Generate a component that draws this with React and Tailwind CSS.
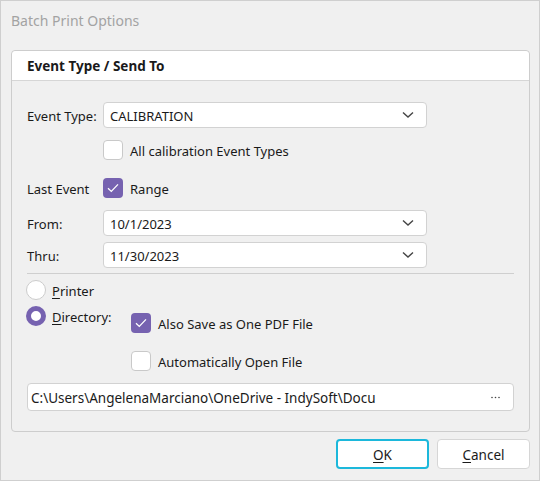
import React, { useState } from "react";

const font = { fontFamily: '"Noto Sans", "Open Sans", sans-serif' };

const Chevron = () => (
  <svg width="12" height="8" viewBox="0 0 12 8" className="text-[#444]">
    <path d="M1 1.5 L6 6 L11 1.5" fill="none" stroke="currentColor" strokeWidth="1.4" />
  </svg>
);

const Dots = () => (
  <svg width="9" height="3" viewBox="0 0 9 3" className="text-[#444]">
    <circle cx="1" cy="1.5" r="0.8" fill="currentColor" />
    <circle cx="4.5" cy="1.5" r="0.8" fill="currentColor" />
    <circle cx="8" cy="1.5" r="0.8" fill="currentColor" />
  </svg>
);

const Check = ({ checked, onClick }) => (
  <div
    onClick={onClick}
    className={
      checked
        ? "w-[20px] h-[20px] rounded-[4px] bg-[#7662b0] flex items-center justify-center shrink-0"
        : "w-[20px] h-[20px] rounded-[4px] bg-white border border-[#c9c9c9] shrink-0"
    }
  >
    {checked && (
      <svg width="12" height="10" viewBox="0 0 12 10">
        <path d="M1 5.2 L4.3 8.4 L11 1.4" fill="none" stroke="white" strokeWidth="1.3" />
      </svg>
    )}
  </div>
);

const Select = ({ value }) => (
  <div className="w-[324px] h-[26px] bg-white border border-[#d2d2d2] rounded-[4px] flex items-center justify-between pl-[6px] pr-[12px]">
    <span className="text-[13px] text-[#1a1a1a] pt-[3px]">{value}</span>
    <Chevron />
  </div>
);

const App = () => {
  const [allTypes, setAllTypes] = useState(false);
  const [range, setRange] = useState(true);
  const [savePdf, setSavePdf] = useState(true);
  const [autoOpen, setAutoOpen] = useState(false);
  const [dest, setDest] = useState("dir");

  return (
    <div style={font} className="w-[540px] h-[481px] bg-[#f0f0f0] border border-[#cfcfcf] flex flex-col text-[#1a1a1a]">
      <div className="h-[49px] pl-[10px] pt-[10px] leading-[20px] text-[14px] text-[#a3a3a3]">Batch Print Options</div>

      {/* panel */}
      <div className="ml-[10px] w-[519px] border border-[#cdcdcd] rounded-[4px] flex flex-col">
        <div className="h-[30px] bg-white border-b border-[#d6d6d6] rounded-t-[4px] flex items-center pl-[15px] text-[13.5px] font-bold">
          <span className="pt-[2px]">Event Type / Send To</span>
        </div>

        <div className="pl-[15px] pb-[20px] text-[13px]">
          <div className="mt-[21px] flex items-center h-[26px]">
            <span className="w-[76px] pt-[3px]">Event Type:</span>
            <Select value="CALIBRATION" />
          </div>
          <div className="mt-[12px] flex items-center h-[20px] pl-[76px]">
            <Check checked={allTypes} onClick={() => setAllTypes(!allTypes)} />
            <span className="ml-[7px] pt-[3px]">All calibration Event Types</span>
          </div>
          <div className="mt-[18px] flex items-center h-[20px]">
            <span className="w-[76px] pt-[3px]">Last Event</span>
            <Check checked={range} onClick={() => setRange(!range)} />
            <span className="ml-[7px] pt-[3px]">Range</span>
          </div>
          <div className="mt-[12px] flex items-center h-[26px]">
            <span className="w-[76px] pt-[3px]">From:</span>
            <Select value="10/1/2023" />
          </div>
          <div className="mt-[6px] flex items-center h-[26px]">
            <span className="w-[76px] pt-[3px]">Thru:</span>
            <Select value="11/30/2023" />
          </div>
          <div className="mt-[5px] w-[487px] h-px bg-[#cfcfcf]"></div>

          <div className="mt-[6px] flex items-center h-[20px] -ml-[1px]" onClick={() => setDest("printer")}>
            <div
              className={
                dest === "printer"
                  ? "w-[20px] h-[20px] rounded-full border-[5px] border-[#7662b0] bg-white"
                  : "w-[20px] h-[20px] rounded-full border border-[#cccccc] bg-white"
              }
            ></div>
            <span className="ml-[6px] pt-[3px]">
              <span className="underline underline-offset-2">P</span>rinter
            </span>
          </div>

          <div className="mt-[6px] flex -ml-[1px]">
            <div className="flex items-center h-[20px] w-[105px]" onClick={() => setDest("dir")}>
              <div
                className={
                  dest === "dir"
                    ? "w-[20px] h-[20px] rounded-full border-[5px] border-[#7662b0] bg-white"
                    : "w-[20px] h-[20px] rounded-full border border-[#cccccc] bg-white"
                }
              ></div>
              <span className="ml-[6px] pt-[3px]">
                <span className="underline underline-offset-2">D</span>irectory:
              </span>
            </div>
            <div className="flex flex-col">
              <div className="mt-[7px] flex items-center h-[20px]">
                <Check checked={savePdf} onClick={() => setSavePdf(!savePdf)} />
                <span className="ml-[7px] pt-[3px]">Also Save as One PDF File</span>
              </div>
              <div className="mt-[18px] flex items-center h-[20px]">
                <Check checked={autoOpen} onClick={() => setAutoOpen(!autoOpen)} />
                <span className="ml-[7px] pt-[3px]">Automatically Open File</span>
              </div>
            </div>
          </div>

          <div className="mt-[12px] w-[487px] h-[28px] bg-white border border-[#d2d2d2] rounded-[4px] flex items-center justify-between pl-[3px] pr-[13px]">
            <span className="pt-[3px] text-[13.5px]">C:\Users\AngelenaMarciano\OneDrive - IndySoft\Docu</span>
            <Dots />
          </div>
        </div>
      </div>

      {/* buttons */}
      <div className="mt-[7px] flex justify-end gap-[8px] pr-[9px] text-[13.5px]">
        <button className="w-[93px] h-[30px] bg-white border-2 border-[#1cb8db] rounded-[4px] pt-[3px]">
          <span className="underline underline-offset-2">O</span>K
        </button>
        <button className="w-[93px] h-[30px] bg-white border border-[#d6d6d6] rounded-[4px] pt-[3px]">
          <span className="underline underline-offset-2">C</span>ancel
        </button>
      </div>
    </div>
  );
};

export default App;
